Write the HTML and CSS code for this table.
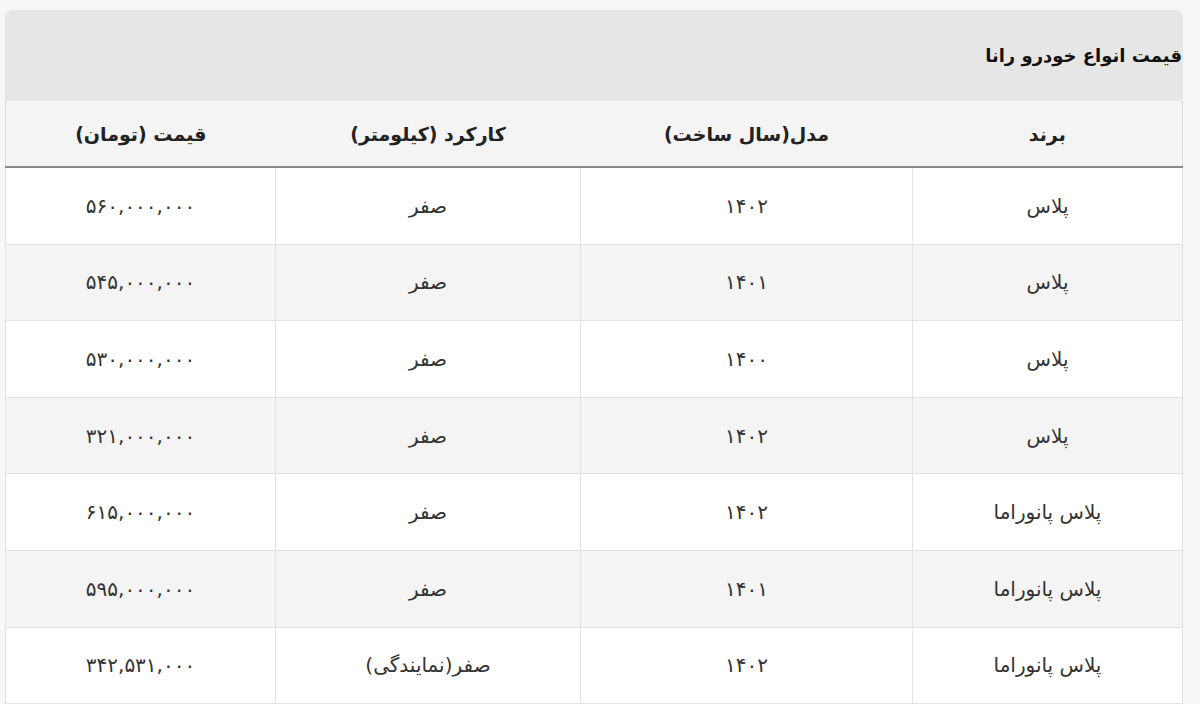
FILE: index.html
```html
<!DOCTYPE html>
<html lang="fa" dir="rtl">
<head>
<meta charset="utf-8">
<title>قیمت انواع خودرو رانا</title>
<link rel="stylesheet" href="styles.css">
</head>
<body>
<div class="wrap">
  <table class="price-table">
    <caption class="caption">قیمت انواع خودرو رانا</caption>
    <colgroup>
      <col class="c-brand">
      <col class="c-model">
      <col class="c-km">
      <col class="c-price">
    </colgroup>
    <thead>
      <tr>
        <th>برند</th>
        <th>مدل(سال ساخت)</th>
        <th>کارکرد (کیلومتر)</th>
        <th>قیمت (تومان)</th>
      </tr>
    </thead>
    <tbody>
      <tr><td>پلاس</td><td>۱۴۰۲</td><td>صفر</td><td>۵۶۰,۰۰۰,۰۰۰</td></tr>
      <tr><td>پلاس</td><td>۱۴۰۱</td><td>صفر</td><td>۵۴۵,۰۰۰,۰۰۰</td></tr>
      <tr><td>پلاس</td><td>۱۴۰۰</td><td>صفر</td><td>۵۳۰,۰۰۰,۰۰۰</td></tr>
      <tr><td>پلاس</td><td>۱۴۰۲</td><td>صفر</td><td>۳۲۱,۰۰۰,۰۰۰</td></tr>
      <tr><td>پلاس پانوراما</td><td>۱۴۰۲</td><td>صفر</td><td>۶۱۵,۰۰۰,۰۰۰</td></tr>
      <tr><td>پلاس پانوراما</td><td>۱۴۰۱</td><td>صفر</td><td>۵۹۵,۰۰۰,۰۰۰</td></tr>
      <tr><td>پلاس پانوراما</td><td>۱۴۰۲</td><td>صفر(نمایندگی)</td><td>۳۴۲,۵۳۱,۰۰۰</td></tr>
    </tbody>
  </table>
</div>
</body>
</html>
```

FILE: styles.css
```css
html, body {
  margin: 0;
  padding: 0;
  background: #f7f7f7;
}
body {
  font-family: "DejaVu Sans", "Noto Sans", sans-serif;
  color: #333;
}
.wrap {
  padding: 10px 17px 0 6px;
}
.price-table {
  width: 1177px;
  border-collapse: collapse;
  table-layout: fixed;
}
.caption {
  background: #e6e6e6;
  border-radius: 7px 7px 0 0;
  height: 91px;
  line-height: 91px;
  text-align: right;
  padding: 0 1px 0 0;
  font-size: 18px;
  font-weight: bold;
  color: #111;
  box-sizing: border-box;
}
.c-brand { width: 270px; }
.c-model { width: 332px; }
.c-km { width: 305px; }
.c-price { width: 270px; }
.price-table th {
  background: #f4f4f4;
  height: 65px;
  font-size: 19px;
  font-weight: bold;
  color: #222;
  border: 0;
  border-bottom: 2px solid #8a8a8a;
  padding: 0;
  text-align: center;
}
.price-table th:first-child { border-right: 1px solid #dcdcdc; }
.price-table th:last-child { border-left: 1px solid #dcdcdc; }
.price-table td {
  height: 75.6px;
  padding: 0;
  text-align: center;
  font-size: 20px;
  color: #333;
  border: 1px solid #e2e2e2;
  background: #fff;
}
.price-table tbody tr:nth-child(even) td {
  background: #f4f4f4;
}
```
